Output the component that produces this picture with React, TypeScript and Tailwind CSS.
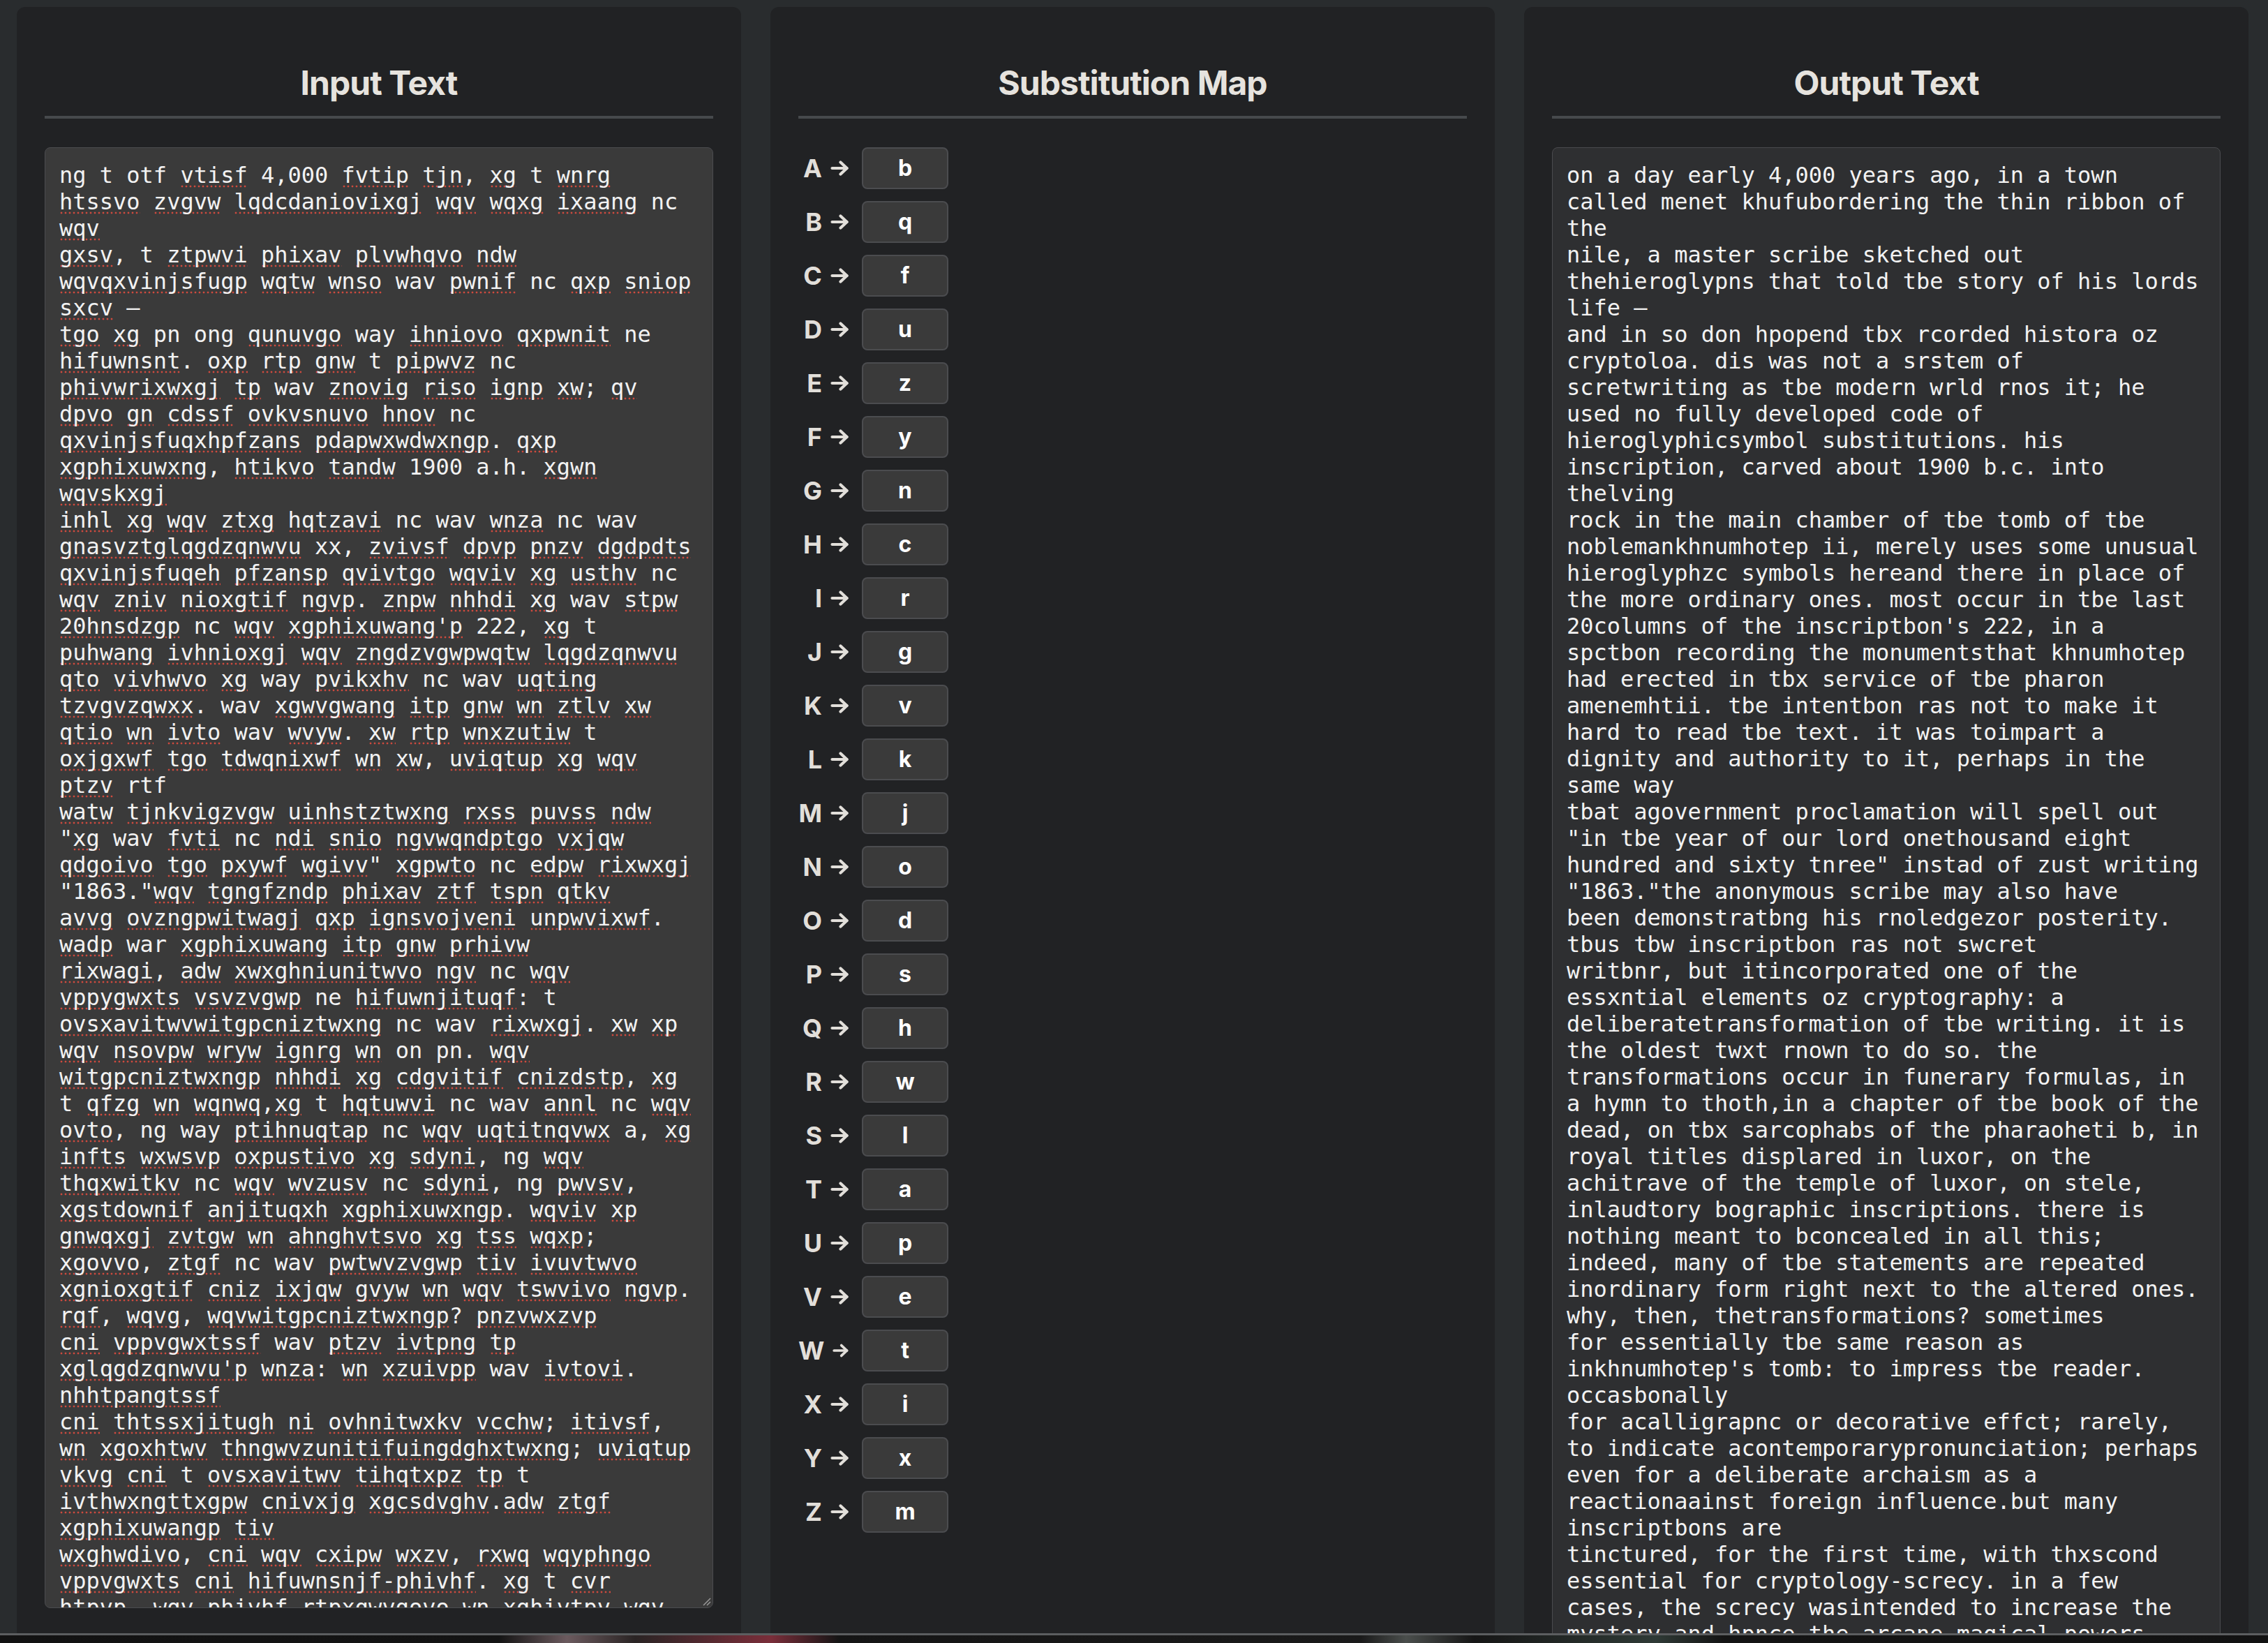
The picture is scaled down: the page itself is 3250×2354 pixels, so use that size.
import React from "react";

const KEY: Record<string, string> = {
  a: "b", b: "q", c: "f", d: "u", e: "z", f: "y", g: "n", h: "c", i: "r",
  j: "g", k: "v", l: "k", m: "j", n: "o", o: "d", p: "s", q: "h", r: "w",
  s: "l", t: "a", u: "p", v: "e", w: "t", x: "i", y: "x", z: "m",
};

const LINES = [
  "ng t otf vtisf 4,000 fvtip tjn, xg t wnrg",
  "htssvo zvgvw lqdcdaniovixgj wqv wqxg ixaang nc",
  "wqv",
  "gxsv, t ztpwvi phixav plvwhqvo ndw",
  "wqvqxvinjsfugp wqtw wnso wav pwnif nc qxp sniop",
  "sxcv –",
  "tgo xg pn ong qunuvgo way ihniovo qxpwnit ne",
  "hifuwnsnt. oxp rtp gnw t pipwvz nc",
  "phivwrixwxgj tp wav znovig riso ignp xw; qv",
  "dpvo gn cdssf ovkvsnuvo hnov nc",
  "qxvinjsfuqxhpfzans pdapwxwdwxngp. qxp",
  "xgphixuwxng, htikvo tandw 1900 a.h. xgwn",
  "wqvskxgj",
  "inhl xg wqv ztxg hqtzavi nc wav wnza nc wav",
  "gnasvztglqgdzqnwvu xx, zvivsf dpvp pnzv dgdpdts",
  "qxvinjsfuqeh pfzansp qvivtgo wqviv xg usthv nc",
  "wqv zniv nioxgtif ngvp. znpw nhhdi xg wav stpw",
  "20hnsdzgp nc wqv xgphixuwang'p 222, xg t",
  "puhwang ivhnioxgj wqv zngdzvgwpwqtw lqgdzqnwvu",
  "qto vivhwvo xg way pvikxhv nc wav uqting",
  "tzvgvzqwxx. wav xgwvgwang itp gnw wn ztlv xw",
  "qtio wn ivto wav wvyw. xw rtp wnxzutiw t",
  "oxjgxwf tgo tdwqnixwf wn xw, uviqtup xg wqv",
  "ptzv rtf",
  "watw tjnkvigzvgw uinhstztwxng rxss puvss ndw",
  "\"xg wav fvti nc ndi snio ngvwqndptgo vxjqw",
  "qdgoivo tgo pxywf wgivv\" xgpwto nc edpw rixwxgj",
  "\"1863.\"wqv tgngfzndp phixav ztf tspn qtkv",
  "avvg ovzngpwitwagj qxp ignsvojveni unpwvixwf.",
  "wadp war xgphixuwang itp gnw prhivw",
  "rixwagi, adw xwxghniunitwvo ngv nc wqv",
  "vppygwxts vsvzvgwp ne hifuwnjituqf: t",
  "ovsxavitwvwitgpcniztwxng nc wav rixwxgj. xw xp",
  "wqv nsovpw wryw ignrg wn on pn. wqv",
  "witgpcniztwxngp nhhdi xg cdgvitif cnizdstp, xg",
  "t qfzg wn wqnwq,xg t hqtuwvi nc wav annl nc wqv",
  "ovto, ng way ptihnuqtap nc wqv uqtitnqvwx a, xg",
  "infts wxwsvp oxpustivo xg sdyni, ng wqv",
  "thqxwitkv nc wqv wvzusv nc sdyni, ng pwvsv,",
  "xgstdownif anjituqxh xgphixuwxngp. wqviv xp",
  "gnwqxgj zvtgw wn ahnghvtsvo xg tss wqxp;",
  "xgovvo, ztgf nc wav pwtwvzvgwp tiv ivuvtwvo",
  "xgnioxgtif cniz ixjqw gvyw wn wqv tswvivo ngvp.",
  "rqf, wqvg, wqvwitgpcniztwxngp? pnzvwxzvp",
  "cni vppvgwxtssf wav ptzv ivtpng tp",
  "xglqgdzqnwvu'p wnza: wn xzuivpp wav ivtovi.",
  "nhhtpangtssf",
  "cni thtssxjitugh ni ovhnitwxkv vcchw; itivsf,",
  "wn xgoxhtwv thngwvzunitifuingdghxtwxng; uviqtup",
  "vkvg cni t ovsxavitwv tihqtxpz tp t",
  "ivthwxngttxgpw cnivxjg xgcsdvghv.adw ztgf",
  "xgphixuwangp tiv",
  "wxghwdivo, cni wqv cxipw wxzv, rxwq wqyphngo",
  "vppvgwxts cni hifuwnsnjf-phivhf. xg t cvr",
  "htpvp, wqv phivhf rtpxgwvgovo wn xghivtpv wqv",
  "zfpwvif tgo qughv wqv tihtgv ztjxhts unrvip",
  "nc wqv phixavp.",
];

const INPUT = LINES.join("\n");
const OUTPUT = INPUT.replace(/[a-z]/g, (c) => KEY[c]);

// words the spell checker leaves alone
const KNOWN = new Set(["t", "a", "h", "ng", "otf", "nc", "wav", "way", "xx", "ne", "pn", "ong", "rtf", "war", "on"]);

function Underlined({ text }: { text: string }) {
  const parts = text.split(/([A-Za-z0-9'](?:[A-Za-z0-9'-]*[A-Za-z0-9'])?)/);
  return (
    <>
      {parts.map((p, i) => {
        const isWord = i % 2 === 1;
        if (isWord && /[a-z]/i.test(p) && !KNOWN.has(p)) {
          return (
            <span
              key={i}
              className="bg-[radial-gradient(circle,#cf4a3e_1.2px,transparent_1.7px)] bg-[length:6px_6px] bg-left-bottom bg-repeat-x"
            >
              {p}
            </span>
          );
        }
        return <React.Fragment key={i}>{p}</React.Fragment>;
      })}
    </>
  );
}

function Arrow() {
  return (
    <svg width="27" height="22" viewBox="0 0 27 22" fill="none" stroke="#e2dfda" strokeWidth="4.2" strokeLinecap="round" strokeLinejoin="round">
      <path d="M2.5 11h21" />
      <path d="M14.5 2.5 23.5 11l-9 8.5" />
    </svg>
  );
}

function Heading({ children }: { children: React.ReactNode }) {
  return (
    <h2 className="border-b-4 border-[#46494c] pt-10 pb-[18px] text-center font-['Inter',sans-serif] text-[48px] leading-[58px] font-bold tracking-[-0.02em] text-[#e6e3de]">
      {children}
    </h2>
  );
}

const panel = "flex min-w-0 flex-1 flex-col overflow-hidden rounded-t-xl bg-[#212224] px-10 pt-10";
const mono = "font-['DejaVu_Sans_Mono',monospace] text-[32px] leading-[38px] text-[#f2f2f2] whitespace-pre-wrap break-words";

export default function App() {
  const letters = Object.keys(KEY);
  return (
    <div className="h-[2354px] w-full overflow-hidden bg-[#292c2e]">
      <div className="flex h-[2340px] gap-[42px] overflow-hidden pt-[10px] pr-[28px] pl-6">
        <section className={panel}>
          <Heading>Input Text</Heading>
          <div className="relative mt-[41px] h-[2093px] shrink-0 overflow-hidden rounded-lg border border-[#4b4c4f] bg-[#3a3a3a] p-5">
            <div className={mono}>
              <Underlined text={INPUT} />
            </div>
            <svg className="absolute right-[2px] bottom-[2px]" width="14" height="14" viewBox="0 0 14 14" stroke="#9c9c9c" strokeWidth="1.4">
              <path d="M13 3 3 13" />
              <path d="M13 8 8 13" />
            </svg>
          </div>
        </section>

        <section className={panel}>
          <Heading>Substitution Map</Heading>
          <div className="mt-[41px] flex flex-col gap-[17px]">
            {letters.map((l) => (
              <div key={l} className="flex h-[60px] items-center">
                <div className="flex w-[73px] items-center justify-end gap-[12px] font-['Inter',sans-serif] text-[36px] leading-none font-bold text-[#e2dfda]">
                  <span>{l.toUpperCase()}</span>
                  <Arrow />
                </div>
                <div className="ml-[18px] flex h-[60px] w-[124px] items-center justify-center rounded-lg border-2 border-[#4b4c4f] bg-[#3a3a3a] font-['Inter',sans-serif] text-[32px] leading-none font-bold text-white">
                  {KEY[l]}
                </div>
              </div>
            ))}
          </div>
        </section>

        <section className={panel}>
          <Heading>Output Text</Heading>
          <div className="mt-[41px] shrink-0 rounded-lg border border-[#4a4b4e] bg-[#2e2f31] p-5">
            <div className={mono}>{OUTPUT}</div>
          </div>
        </section>
      </div>
      <div className="h-[3px] bg-[#5c5e60]" />
      <div className="h-[11px] bg-[linear-gradient(90deg,#121212_0%,#141414_22%,#6b5a5e_25%,#2a2424_28%,#7a2e3a_34%,#151515_37%,#1a1a1a_60%,#4a4e4c_62%,#161616_65%,#2f3a36_73%,#141414_76%,#121212_100%)]" />
    </div>
  );
}
